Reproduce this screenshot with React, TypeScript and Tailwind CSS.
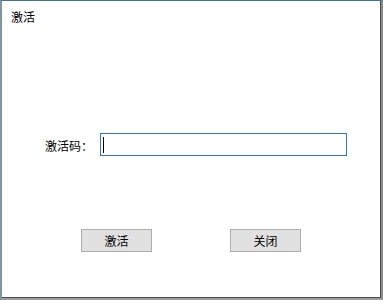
import React from "react";

export default function App() {
  const font = { fontFamily: '"Noto Sans CJK SC", "Microsoft YaHei", sans-serif' };
  return (
    <div
      className="w-[383px] h-[300px] bg-white border-t border-t-[#40739a] border-l-2 border-l-[#7f95a5] border-r-2 border-r-[#8a8a8a] border-b-2 border-b-[#9d9d9d] shadow-[inset_-1px_-1px_0_#4d4d4d] flex flex-col text-[12px] text-black"
      style={font}
    >
      <div className="pl-[9px] pt-[8px] h-[24px] leading-[16px]">激活</div>
      <div className="mt-[108px] pl-[43px] flex items-center h-[23px]">
        <div className="w-[48px] leading-[16px] pt-[2px]">激活码：</div>
        <div className="ml-[7px] w-[247px] h-[23px] border border-[#2f7ab8] bg-white flex items-center">
          <span className="ml-[2px] w-px h-[16px] bg-black" />
        </div>
      </div>
      <div className="mt-[73px] pl-[79px] flex gap-[78px]">
        <button className="w-[71px] h-[23px] bg-[#e1e1e1] border border-[#adadad] leading-[16px] text-[12px]" style={font}>
          激活
        </button>
        <button className="w-[71px] h-[23px] bg-[#e1e1e1] border border-[#adadad] leading-[16px] text-[12px]" style={font}>
          关闭
        </button>
      </div>
    </div>
  );
}
